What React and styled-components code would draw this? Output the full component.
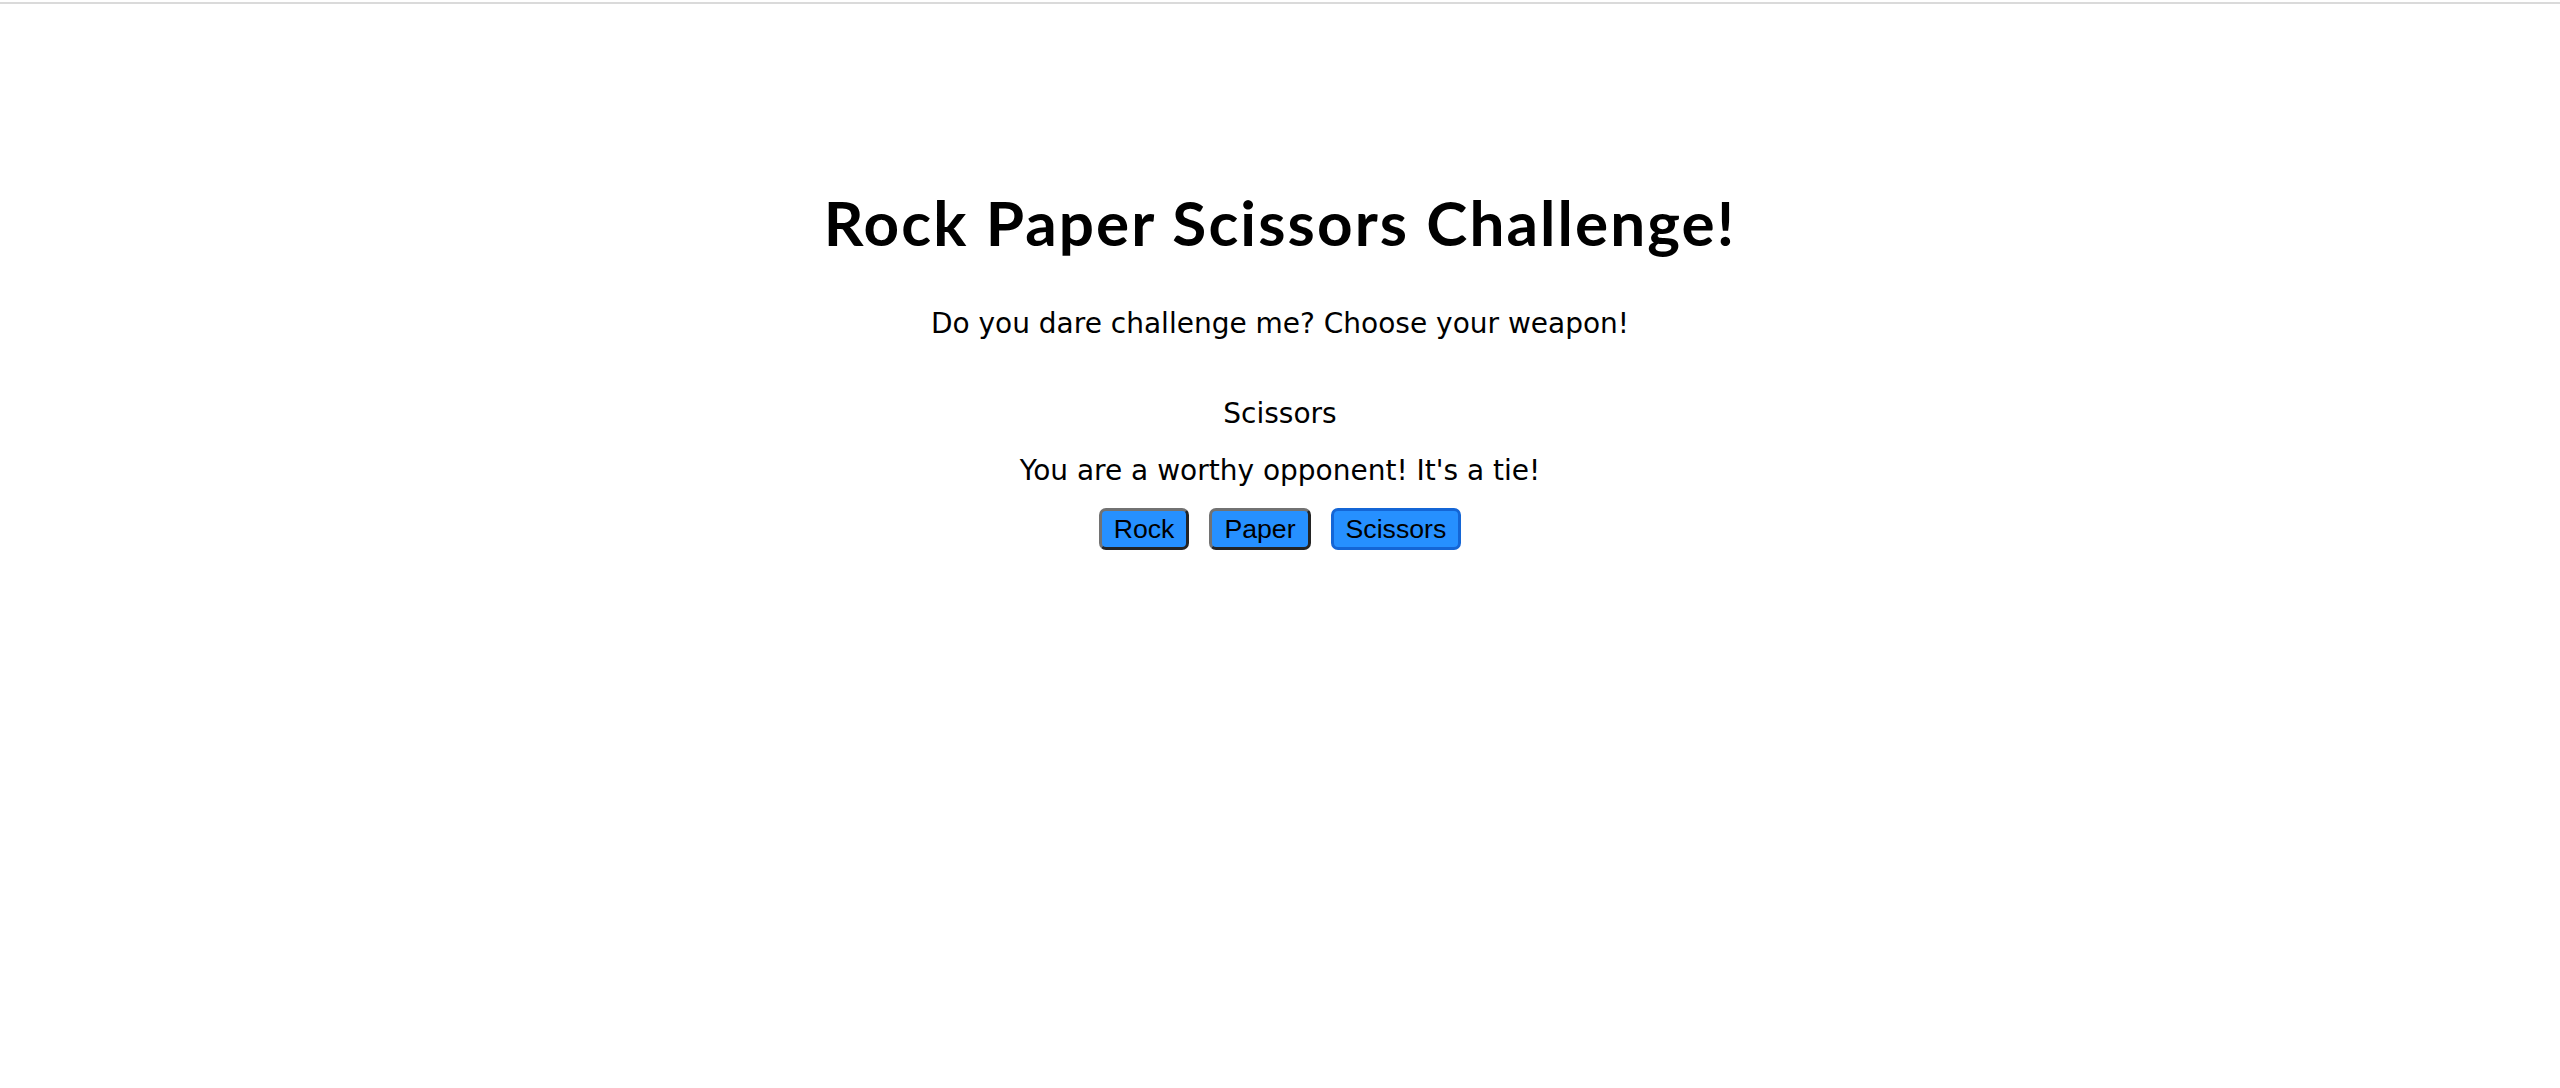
import React, { useState } from "react";
import styled, { createGlobalStyle } from "styled-components";

const GlobalStyle = createGlobalStyle`
  html, body {
    margin: 0;
    padding: 0;
    background: #ffffff;
  }
  body {
    font-family: "DejaVu Sans", Verdana, sans-serif;
    color: #000000;
  }
`;

const TopRule = styled.div`
  height: 2px;
  margin-top: 2px;
  background: #dadada;
`;

const Main = styled.main`
  display: flex;
  flex-direction: column;
  align-items: center;
  text-align: center;
`;

const Title = styled.h1`
  margin: 182px 0 0;
  font-family: "Lato", "DejaVu Sans", sans-serif;
  font-weight: 700;
  font-size: 62px;
  letter-spacing: 2.1px;
  line-height: 72px;
`;

const Line = styled.p`
  margin: ${(p) => p.$gap}px 0 0;
  font-family: "DejaVu Sans", Verdana, sans-serif;
  font-size: 28px;
  line-height: 34px;
`;

const ButtonRow = styled.div`
  display: flex;
  gap: 20px;
  margin-top: 20px;
`;

const WeaponButton = styled.button`
  font-family: "Liberation Sans", Arial, sans-serif;
  font-size: 26.67px;
  line-height: 30px;
  padding: 3px 12px;
  color: #000000;
  background: #2690ff;
  border: 3px solid;
  border-radius: 7px;
  border-color: ${(p) =>
    p.$active ? "#1466d6" : "#727272 #242424 #242424 #727272"};
  cursor: pointer;
  outline: none;
`;

const weapons = ["Rock", "Paper", "Scissors"];

export default function App() {
  const [choice, setChoice] = useState("Scissors");
  return (
    <>
      <GlobalStyle />
      <TopRule />
      <Main>
        <Title>Rock Paper Scissors Challenge!</Title>
        <Line $gap={49}>Do you dare challenge me? Choose your weapon!</Line>
        <Line $gap={56}>{choice}</Line>
        <Line $gap={23}>You are a worthy opponent! It's a tie!</Line>
        <ButtonRow>
          {weapons.map((w) => (
            <WeaponButton
              key={w}
              $active={w === choice}
              onClick={() => setChoice(w)}
            >
              {w}
            </WeaponButton>
          ))}
        </ButtonRow>
      </Main>
    </>
  );
}
